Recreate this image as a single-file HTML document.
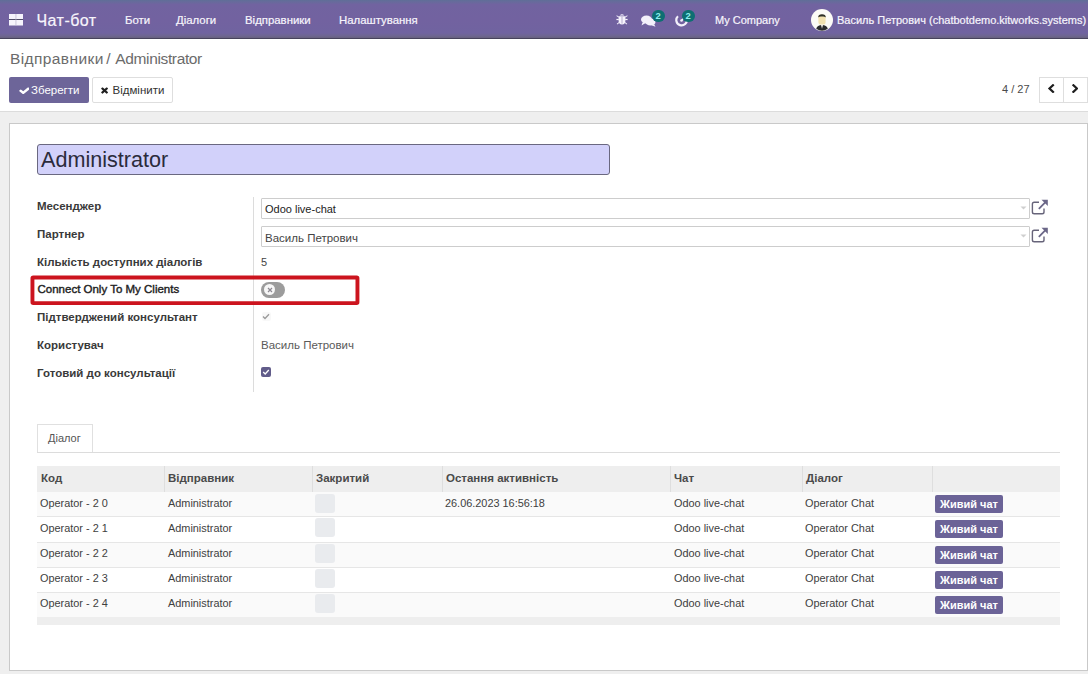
<!DOCTYPE html>
<html><head><meta charset="utf-8">
<style>
*{box-sizing:border-box;margin:0;padding:0}
html,body{width:1088px;height:674px;overflow:hidden;background:#efefef;font-family:"Liberation Sans",sans-serif;color:#333}
.a{position:absolute;white-space:nowrap;line-height:1}
#nav{position:absolute;left:0;top:0;width:1088px;height:39px;background:linear-gradient(#5f6e97 0,#686a9c 2px,#7163a0 4.5px,#7262a0 20px,#7063a0 33px,#6e6690 36px,#67617f 38px);border-bottom:1px solid #47435c}
.nt{color:#f7f5fc;font-size:11.4px;-webkit-text-stroke:0.2px #f7f5fc}
#cp{position:absolute;left:0;top:0;width:1088px;height:112px;background:#fff;border-bottom:1px solid #dcdcdc}
#sheet{position:absolute;left:9px;top:123px;width:1079px;height:548px;background:#fff;border:1px solid #c9c9c9}
.lbl{font-weight:bold;font-size:11.5px;color:#3a3a3a}
.inp{position:absolute;left:261px;width:769px;height:21px;border:1px solid #cdcdcd;border-radius:1px;background:#fff}
.th{font-weight:bold;font-size:11.5px;color:#4a4a4a}
.td{font-size:10.9px;color:#404040}
.btnc{position:absolute;left:935px;width:68px;height:18px;background:#6b6397;border-radius:2px;color:#fff;font-weight:bold;font-size:11px;text-align:center;line-height:18px}
</style></head><body>
<div id="cp">
  <div class="a" style="left:10px;top:51px;font-size:15.5px;letter-spacing:0.4px;color:#6b6b6b">Відправники</div>
  <div class="a" style="left:106.3px;top:51px;font-size:15.5px;color:#6b6b6b">/</div>
  <div class="a" style="left:115.3px;top:51px;font-size:15.5px;letter-spacing:-0.36px;color:#6b6b6b">Administrator</div>
  <div class="a" style="left:9px;top:77px;width:80px;height:26px;background:#6d6599;border-radius:2px"></div>
  <div class="a" style="left:31px;top:85px;font-size:11.5px;color:#fff">Зберегти</div>
  <div class="a" style="left:92px;top:77px;width:81px;height:26px;background:#fff;border:1px solid #dedede;border-radius:2px"></div>
  <div class="a" style="left:112.5px;top:84.8px;font-size:11.5px;color:#333">Відмінити</div>
  <div class="a" style="left:1002px;top:84px;font-size:11px;color:#4a4a4a">4 / 27</div>
  <div class="a" style="left:1039px;top:77px;width:25px;height:26px;border:1px solid #dedede;background:#fff"></div>
  <div class="a" style="left:1063px;top:77px;width:25px;height:26px;border:1px solid #dedede;background:#fff"></div>
</div>
<div id="nav">
  <svg class="a" style="left:9px;top:14px" width="14" height="11.5" viewBox="0 0 14 11.5"><rect x="0" y="0" width="14" height="11.5" fill="#f5f3fc"/><rect x="0" y="5" width="14" height="0.9" fill="#3f3b58"/><rect x="6.6" y="0" width="0.7" height="11.5" fill="#b9b4cc"/></svg>
  <div class="a nt" style="left:36.5px;top:12.8px;font-size:16px;letter-spacing:0.45px">Чат-бот</div>
  <div class="a nt" style="left:125px;top:15px">Боти</div>
  <div class="a nt" style="left:176px;top:15px">Діалоги</div>
  <div class="a nt" style="left:245px;top:15px">Відправники</div>
  <div class="a nt" style="left:339px;top:15px">Налаштування</div>
  <div class="a nt" style="left:715px;top:15px;font-size:11px">My Company</div>
  <div class="a nt" style="left:837px;top:15px;font-size:11px">Василь Петрович (chatbotdemo.kitworks.systems)</div>
</div>
<div id="sheet"></div>
<!-- name -->
<div class="a" style="left:37px;top:144px;width:573px;height:31px;background:#d2d1fa;border:1px solid #6a6880;border-radius:3px"></div>
<div class="a" style="left:41px;top:149px;font-size:21.6px;color:#2b2b3b">Administrator</div>
<!-- labels -->
<div class="a lbl" style="left:37px;top:201px">Месенджер</div>
<div class="a lbl" style="left:37px;top:229px">Партнер</div>
<div class="a lbl" style="left:37px;top:257px">Кількість доступних діалогів</div>
<div class="a lbl" style="left:37.5px;top:284.3px;font-size:11.5px;font-weight:normal;color:#222;-webkit-text-stroke:0.4px #222">Connect Only To My Clients</div>
<div class="a lbl" style="left:37px;top:312px">Підтверджений консультант</div>
<div class="a lbl" style="left:37px;top:339.5px">Користувач</div>
<div class="a lbl" style="left:37px;top:367.5px">Готовий до консультації</div>
<div class="a" style="left:253px;top:197px;width:1px;height:195px;background:#dcdcdc"></div>
<div class="inp" style="top:198px"></div>
<div class="inp" style="top:226px"></div>
<div class="a" style="left:265px;top:204px;font-size:11px;color:#222">Odoo live-chat</div>
<div class="a" style="left:265px;top:232.5px;font-size:11.5px;color:#444">Василь Петрович</div>
<div class="a" style="left:261px;top:257px;font-size:11px;color:#444">5</div>
<div class="a" style="left:261px;top:340.2px;font-size:11.5px;color:#5a5a5a">Василь Петрович</div>
<!-- red box -->
<svg class="a" style="left:28px;top:273px" width="334" height="35" viewBox="0 0 334 35"><rect x="4.45" y="4.5" width="325" height="25.6" rx="0.8" fill="none" stroke="#cc141e" stroke-width="3.9"/></svg>
<!-- tab -->
<div class="a" style="left:37px;top:424px;width:56px;height:28px;background:#fff;border:1px solid #e0e0e0;border-bottom:none"></div>
<div class="a" style="left:37px;top:452px;width:1023px;height:1px;background:#dcdcdc"></div>
<div class="a" style="left:48px;top:433px;font-size:11px;color:#555">Діалог</div>
<!-- table -->
<div class="a" style="left:37px;top:466px;width:1023px;height:26px;background:#eeeeee"></div>
<div class="a" style="left:37px;top:617px;width:1023px;height:8px;background:#eeeeee"></div>
<div class="a" style="left:37px;top:492px;width:1023px;height:24px;background:#fafafa"></div>
<div class="a" style="left:37px;top:542px;width:1023px;height:25px;background:#fafafa"></div>
<div class="a" style="left:37px;top:593px;width:1023px;height:24px;background:#fafafa"></div>
<div class="a th" style="left:41px;top:473px">Код</div>
<div class="a th" style="left:168px;top:473px">Відправник</div>
<div class="a th" style="left:316px;top:473px">Закритий</div>
<div class="a th" style="left:446px;top:473px">Остання активність</div>
<div class="a th" style="left:674px;top:473px">Чат</div>
<div class="a th" style="left:806px;top:473px">Діалог</div>
<div class="a" style="left:164px;top:466px;width:1px;height:26px;background:#dedede"></div>
<div class="a" style="left:312px;top:466px;width:1px;height:26px;background:#dedede"></div>
<div class="a" style="left:442px;top:466px;width:1px;height:26px;background:#dedede"></div>
<div class="a" style="left:670px;top:466px;width:1px;height:26px;background:#dedede"></div>
<div class="a" style="left:802px;top:466px;width:1px;height:26px;background:#dedede"></div>
<div class="a" style="left:932px;top:466px;width:1px;height:26px;background:#dedede"></div>
<div class="a" style="left:37px;top:516px;width:1023px;height:1px;background:#e6e6e6"></div>
<div class="a" style="left:37px;top:541.5px;width:1023px;height:1px;background:#e6e6e6"></div>
<div class="a" style="left:37px;top:567px;width:1023px;height:1px;background:#e6e6e6"></div>
<div class="a" style="left:37px;top:592px;width:1023px;height:1px;background:#e6e6e6"></div>
<div class="a td" style="left:40px;top:497.9px">Operator - 2 0</div>
<div class="a td" style="left:168px;top:497.9px">Administrator</div>
<div class="a td" style="left:445px;top:497.9px">26.06.2023 16:56:18</div>
<div class="a td" style="left:674px;top:497.9px">Odoo live-chat</div>
<div class="a td" style="left:805px;top:497.9px">Operator Chat</div>
<div class="a" style="left:315px;top:493.6px;width:20px;height:19px;background:#e9ebee;border-radius:3px"></div>
<div class="btnc" style="top:495.4px">Живий чат</div>
<div class="a td" style="left:40px;top:522.5px">Operator - 2 1</div>
<div class="a td" style="left:168px;top:522.5px">Administrator</div>
<div class="a td" style="left:674px;top:522.5px">Odoo live-chat</div>
<div class="a td" style="left:805px;top:522.5px">Operator Chat</div>
<div class="a" style="left:315px;top:518.2px;width:20px;height:19px;background:#e9ebee;border-radius:3px"></div>
<div class="btnc" style="top:520.4px">Живий чат</div>
<div class="a td" style="left:40px;top:548.4px">Operator - 2 2</div>
<div class="a td" style="left:168px;top:548.4px">Administrator</div>
<div class="a td" style="left:674px;top:548.4px">Odoo live-chat</div>
<div class="a td" style="left:805px;top:548.4px">Operator Chat</div>
<div class="a" style="left:315px;top:544.1px;width:20px;height:19px;background:#e9ebee;border-radius:3px"></div>
<div class="btnc" style="top:545.9px">Живий чат</div>
<div class="a td" style="left:40px;top:573.2px">Operator - 2 3</div>
<div class="a td" style="left:168px;top:573.2px">Administrator</div>
<div class="a td" style="left:674px;top:573.2px">Odoo live-chat</div>
<div class="a td" style="left:805px;top:573.2px">Operator Chat</div>
<div class="a" style="left:315px;top:568.9px;width:20px;height:19px;background:#e9ebee;border-radius:3px"></div>
<div class="btnc" style="top:570.9px">Живий чат</div>
<div class="a td" style="left:40px;top:598.3px">Operator - 2 4</div>
<div class="a td" style="left:168px;top:598.3px">Administrator</div>
<div class="a td" style="left:674px;top:598.3px">Odoo live-chat</div>
<div class="a td" style="left:805px;top:598.3px">Operator Chat</div>
<div class="a" style="left:315px;top:594.0px;width:20px;height:19px;background:#e9ebee;border-radius:3px"></div>
<div class="btnc" style="top:596.0px">Живий чат</div>

<!-- nav icons -->
<svg class="a" style="left:616px;top:13px" width="12" height="12" viewBox="0 0 12 12"><g fill="#f6f3fd"><path d="M3.7 2.6Q6 -0.2 8.3 2.6z"/><path d="M2.6 3.2h6.8v4.6a3.4 3.6 0 0 1-6.8 0z"/><path d="M0.8 2.2l2.2 1.6-0.4 0.8-2.2-1.6z"/><path d="M11.2 2.2l-2.2 1.6 0.4 0.8 2.2-1.6z"/><rect x="0.4" y="5.9" width="2.4" height="1.2"/><rect x="9.2" y="5.9" width="2.4" height="1.2"/><path d="M0.8 10.8l2.2-1.8 0.5 0.8-2.2 1.8z"/><path d="M11.2 10.8l-2.2-1.8-0.5 0.8 2.2 1.8z"/></g><rect x="5.7" y="3.6" width="0.6" height="7" fill="#8a80b0"/></svg>
<svg class="a" style="left:641px;top:15px" width="15" height="12" viewBox="0 0 15 12"><g fill="#f3f0fb"><ellipse cx="5.5" cy="4.5" rx="5.5" ry="4"/><path d="M1.5 7.5L0.5 10.5 4.5 8z"/><ellipse cx="9.5" cy="7" rx="5" ry="3.6"/><path d="M13 9l1.5 2.8-4-1.6z"/></g></svg>
<div class="a" style="left:652px;top:10px;width:13px;height:12px;border-radius:6px;background:#0f6f72"></div>
<div class="a" style="left:655.5px;top:11px;font-size:9.5px;font-weight:bold;color:#8ff0ee">2</div>
<svg class="a" style="left:675px;top:13.2px" width="14" height="14" viewBox="0 0 14 14"><path d="M3 3.2A5.3 5.3 0 1 0 11.8 6" fill="none" stroke="#f3f0fb" stroke-width="2.2"/><path d="M6.5 7.5L8.5 5.5" stroke="#f3f0fb" stroke-width="1.6"/><circle cx="6.5" cy="7.5" r="1.3" fill="#f3f0fb"/></svg>
<div class="a" style="left:682px;top:10px;width:13px;height:12px;border-radius:6px;background:#0f6f72"></div>
<div class="a" style="left:685.5px;top:11px;font-size:9.5px;font-weight:bold;color:#8ff0ee">2</div>
<!-- avatar -->
<svg class="a" style="left:811px;top:9px" width="22" height="22" viewBox="0 0 22 22"><circle cx="11" cy="11" r="11" fill="#fcfbf6"/><path d="M5.2 19.8c0.8-2.6 2.6-3.8 5.8-3.8s5 1.2 5.8 3.8A10.5 10.5 0 0 1 5.2 19.8z" fill="#2b2b2d"/><path d="M10 16h2l-1 3.8z" fill="#f4f2ea"/><rect x="7.4" y="5.8" width="7.2" height="9.8" rx="2.6" fill="#f2e2b0"/><path d="M7.2 8.5c0-2.3 1.3-3.3 3.8-3.3s3.8 1 3.8 3.3c-0.8-0.6-2-0.9-3.8-0.9s-3 0.3-3.8 0.9z" fill="#2f3128"/></svg>
<!-- button icons -->
<svg class="a" style="left:18.5px;top:86.5px" width="10.8" height="7" viewBox="100 262 1571 1224" preserveAspectRatio="none"><path d="M1671 566q0 40-28 68l-724 724-136 136q-28 28-68 28t-68-28l-136-136-362-362q-28-28-28-68t28-68l136-136q28-28 68-28t68 28l294 295 656-657q28-28 68-28t68 28l136 136q28 28 28 68z" fill="#fff"/></svg>
<svg class="a" style="left:101px;top:87.3px" width="7" height="6.5" viewBox="84 294 1214 1228" preserveAspectRatio="none"><path d="M1298 1322q0 40-28 68l-136 136q-28 28-68 28t-68-28l-294-294-294 294q-28 28-68 28t-68-28l-136-136q-28-28-28-68t28-68l294-294-294-294q-28-28-28-68t28-68l136-136q28-28 68-28t68 28l294 294 294-294q28-28 68-28t68 28l136 136q28 28 28 68t-28 68l-294 294 294 294q28 28 28 68z" fill="#1f1f1f"/></svg>
<!-- pager chevrons -->
<svg class="a" style="left:1048.3px;top:84.3px" width="6.4" height="9.2" viewBox="410 26 1036 1612" preserveAspectRatio="none"><path d="M1427 301l-531 531 531 531q19 19 19 45t-19 45l-166 166q-19 19-45 19t-45-19l-742-742q-19-19-19-45t19-45l742-742q19-19 45-19t45 19l166 166q19 19 19 45t-19 45z" fill="#1e1e1e"/></svg>
<svg class="a" style="left:1071.8px;top:84.3px" width="6.4" height="9.2" viewBox="410 26 1036 1612" preserveAspectRatio="none"><g transform="translate(1856 0) scale(-1 1)"><path d="M1427 301l-531 531 531 531q19 19 19 45t-19 45l-166 166q-19 19-45 19t-45-19l-742-742q-19-19-19-45t19-45l742-742q19-19 45-19t45 19l166 166q19 19 19 45t-19 45z" fill="#1e1e1e"/></g></svg>
<!-- dropdown carets -->
<svg class="a" style="left:1020px;top:206px" width="7" height="4" viewBox="0 0 7 4"><path d="M0.5 0.5h6L3.5 3.5z" fill="#cfcfcf"/></svg>
<svg class="a" style="left:1020px;top:234px" width="7" height="4" viewBox="0 0 7 4"><path d="M0.5 0.5h6L3.5 3.5z" fill="#cfcfcf"/></svg>
<!-- external link icons -->
<svg class="a" style="left:1031px;top:199.2px" width="18" height="16" viewBox="0 0 18 16"><path d="M8 3.2H3.2a1.8 1.8 0 0 0-1.8 1.8v8a1.8 1.8 0 0 0 1.8 1.8h8a1.8 1.8 0 0 0 1.8-1.8V9.5" fill="none" stroke="#67647a" stroke-width="1.4"/><path d="M7.8 9.8L15.5 2.2" stroke="#6b6788" stroke-width="1.8"/><path d="M10.5 0.8h6.3v6.3z" fill="#6b6788"/></svg>
<svg class="a" style="left:1031px;top:227.2px" width="18" height="16" viewBox="0 0 18 16"><path d="M8 3.2H3.2a1.8 1.8 0 0 0-1.8 1.8v8a1.8 1.8 0 0 0 1.8 1.8h8a1.8 1.8 0 0 0 1.8-1.8V9.5" fill="none" stroke="#67647a" stroke-width="1.4"/><path d="M7.8 9.8L15.5 2.2" stroke="#6b6788" stroke-width="1.8"/><path d="M10.5 0.8h6.3v6.3z" fill="#6b6788"/></svg>
<!-- toggle -->
<div class="a" style="left:261px;top:281.5px;width:24px;height:16px;border-radius:8px;background:#9c9c9c"></div>
<div class="a" style="left:263.5px;top:283.8px;width:11.6px;height:11.6px;border-radius:6px;background:#f7f7f7"></div>
<svg class="a" style="left:266.5px;top:286.8px" width="6" height="6" viewBox="0 0 6 6"><path d="M1 1l4 4M5 1L1 5" stroke="#8c8890" stroke-width="1.2"/></svg>
<!-- checkboxes -->
<div class="a" style="left:261.5px;top:312px;width:9px;height:9px;border-radius:2px;background:#f8f8f8"></div>
<svg class="a" style="left:262px;top:313px" width="8" height="7" viewBox="0 0 8 7"><path d="M1 3.5l2 2L7 1.2" fill="none" stroke="#9a9a9a" stroke-width="1.3"/></svg>
<div class="a" style="left:261px;top:367px;width:10px;height:10px;border-radius:2px;background:#615c8a"></div>
<svg class="a" style="left:262px;top:368px" width="8" height="8" viewBox="0 0 8 8"><path d="M1.2 4l2 2L6.8 2" fill="none" stroke="#fff" stroke-width="1.3"/></svg>

</body></html>
